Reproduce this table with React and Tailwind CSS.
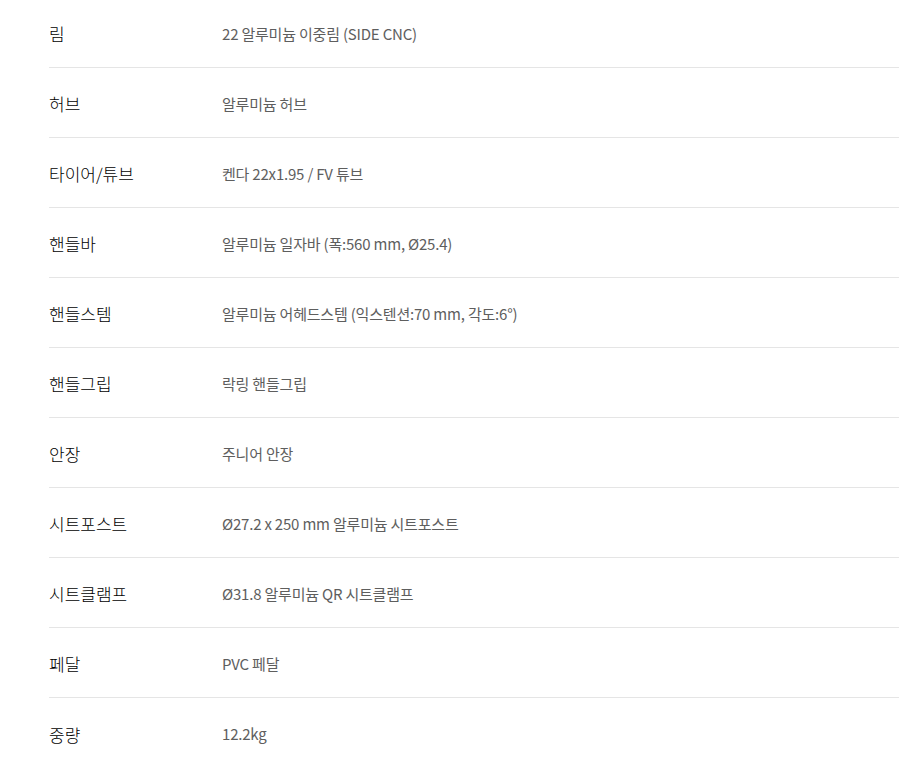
import React from "react";

const specs = [
  { label: "림", value: "22 알루미늄 이중림 (SIDE CNC)" },
  { label: "허브", value: "알루미늄 허브" },
  { label: "타이어/튜브", value: "켄다 22x1.95 / FV 튜브" },
  { label: "핸들바", value: "알루미늄 일자바 (폭:560 mm, Ø25.4)" },
  { label: "핸들스템", value: "알루미늄 어헤드스템 (익스텐션:70 mm, 각도:6°)" },
  { label: "핸들그립", value: "락링 핸들그립" },
  { label: "안장", value: "주니어 안장" },
  { label: "시트포스트", value: "Ø27.2 x 250 mm 알루미늄 시트포스트" },
  { label: "시트클램프", value: "Ø31.8 알루미늄 QR 시트클램프" },
  { label: "페달", value: "PVC 페달" },
  { label: "중량", value: "12.2kg" },
];

export default function App() {
  return (
    <div
      className="bg-white min-h-[767px] pl-[49px] overflow-hidden"
      style={{ fontFamily: '"Noto Sans CJK KR", "Noto Sans", sans-serif' }}
    >
      <div className="-mt-[2px]">
        {specs.map((row, i) => (
          <div
            key={i}
            className={`flex items-center h-[70px] ${
              i < specs.length - 1 ? "border-b border-[#e5e5e5]" : ""
            }`}
          >
            <div className="w-[173px] shrink-0 text-[17px] font-light text-black pt-[3px]">
              {row.label}
            </div>
            <div className="text-[15px] text-[#5e5e5e] pt-[3px] tracking-[-0.2px]">
              {row.value}
            </div>
          </div>
        ))}
      </div>
    </div>
  );
}
